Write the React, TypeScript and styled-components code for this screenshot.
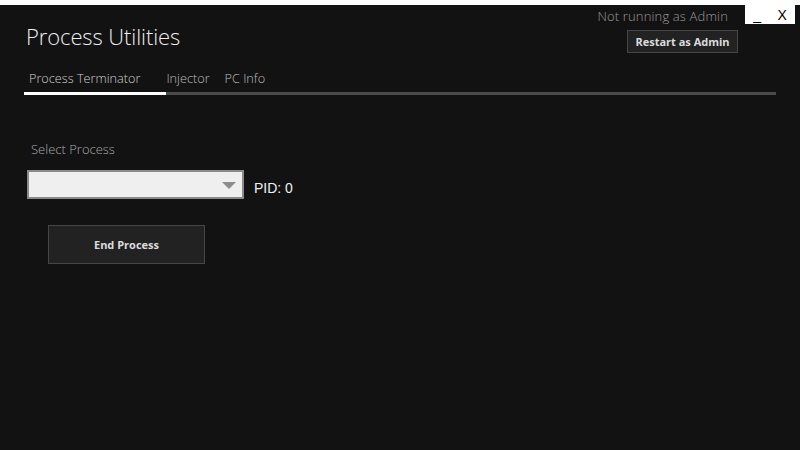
import React from 'react';
import styled, { createGlobalStyle } from 'styled-components';

const Global = createGlobalStyle`
  html, body {
    margin: 0;
    padding: 0;
    background: #ffffff;
  }
  body {
    width: 800px;
    height: 450px;
    overflow: hidden;
  }
`;

const Window = styled.div`
  position: relative;
  margin-top: 5px;
  height: 445px;
  background: #121212;
  font-family: "Open Sans", "Noto Sans", sans-serif;
  color: #e6e6e6;
  box-sizing: border-box;
  padding: 0 24px;
`;

const WindowControls = styled.div`
  position: absolute;
  top: -5px;
  right: 5px;
  width: 50px;
  height: 24px;
  background: #ffffff;
  display: flex;
  align-items: center;
  justify-content: space-around;
  padding-top: 6px;
  box-sizing: border-box;
`;

const ControlButton = styled.span`
  font-family: "Liberation Sans", Arial, sans-serif;
  font-size: 14px;
  color: #000;
  line-height: 1;
`;

const Header = styled.div`
  display: flex;
  justify-content: space-between;
  align-items: flex-start;
  height: 58px;
`;

const Title = styled.h1`
  margin: 16px 0 0 2px;
  font-size: 22px;
  font-weight: 300;
  color: #eeeeee;
  letter-spacing: -0.1px;
`;

const AdminArea = styled.div`
  display: flex;
  flex-direction: column;
  align-items: flex-end;
  margin-right: 38px;
  padding-top: 2px;
`;

const AdminStatus = styled.div`
  font-size: 13px;
  font-weight: 300;
  color: #9a9a9a;
  margin-right: 10px;
  line-height: 18px;
  letter-spacing: 0.15px;
`;

const SmallButton = styled.button<{ $w: number; $h: number }>`
  margin-top: 5px;
  background: #222222;
  border: 1px solid #464646;
  color: #dcdcdc;
  font-family: "Open Sans", "Noto Sans", sans-serif;
  font-weight: 700;
  font-size: 11px;
  width: ${p => p.$w}px;
  height: ${p => p.$h}px;
  padding: 0;
`;

const TabBar = styled.div`
  display: flex;
  margin-top: 6px;
  border-bottom: 3px solid #4a4a4a;
`;

const Tab = styled.div<{ $active?: boolean }>`
  font-size: 12.7px;
  font-weight: 300;
  color: ${p => (p.$active ? '#cfcfcf' : '#bdbdbd')};
  padding: 0 ${p => (p.$active ? 26 : 0)}px 5px ${p => (p.$active ? 5 : 0)}px;
  margin-right: ${p => (p.$active ? 0 : 15)}px;
  margin-bottom: -3px;
  border-bottom: 3px solid ${p => (p.$active ? '#ffffff' : 'transparent')};
  line-height: 18px;
`;

const Content = styled.div`
  padding: 45px 0 0 3px;
`;

const FieldLabel = styled.div`
  font-size: 13px;
  font-weight: 300;
  color: #a8a8a8;
  margin-left: 4px;
  line-height: 18px;
`;

const Row = styled.div`
  display: flex;
  align-items: center;
  gap: 10px;
  margin-top: 12px;
`;

const Select = styled.div`
  position: relative;
  width: 217px;
  height: 29px;
  box-sizing: border-box;
  background: #efefef;
  border: 2px solid #8a8a8a;
`;

const Arrow = styled.svg`
  position: absolute;
  right: 6px;
  top: 10px;
`;

const Pid = styled.span`
  font-family: "Liberation Sans", Arial, sans-serif;
  font-size: 14px;
  color: #f0f0f0;
  margin-top: 6px;
`;

const ButtonRow = styled.div`
  margin: 21px 0 0 21px;
  display: flex;
`;

export default function App() {
  return (
    <>
      <Global />
      <Window>
        <WindowControls>
          <ControlButton>_</ControlButton>
          <ControlButton>X</ControlButton>
        </WindowControls>
        <Header>
          <Title>Process Utilities</Title>
          <AdminArea>
            <AdminStatus>Not running as Admin</AdminStatus>
            <SmallButton $w={111} $h={23}>Restart as Admin</SmallButton>
          </AdminArea>
        </Header>
        <TabBar>
          <Tab $active>Process Terminator</Tab>
          <Tab>Injector</Tab>
          <Tab>PC Info</Tab>
        </TabBar>
        <Content>
          <FieldLabel>Select Process</FieldLabel>
          <Row>
            <Select>
              <Arrow width="14" height="7" viewBox="0 0 14 7">
                <path d="M0 0 L14 0 L7 7 Z" fill="#8c8c8c" />
              </Arrow>
            </Select>
            <Pid>PID: 0</Pid>
          </Row>
          <ButtonRow>
            <SmallButton $w={157} $h={39}>End Process</SmallButton>
          </ButtonRow>
        </Content>
      </Window>
    </>
  );
}
